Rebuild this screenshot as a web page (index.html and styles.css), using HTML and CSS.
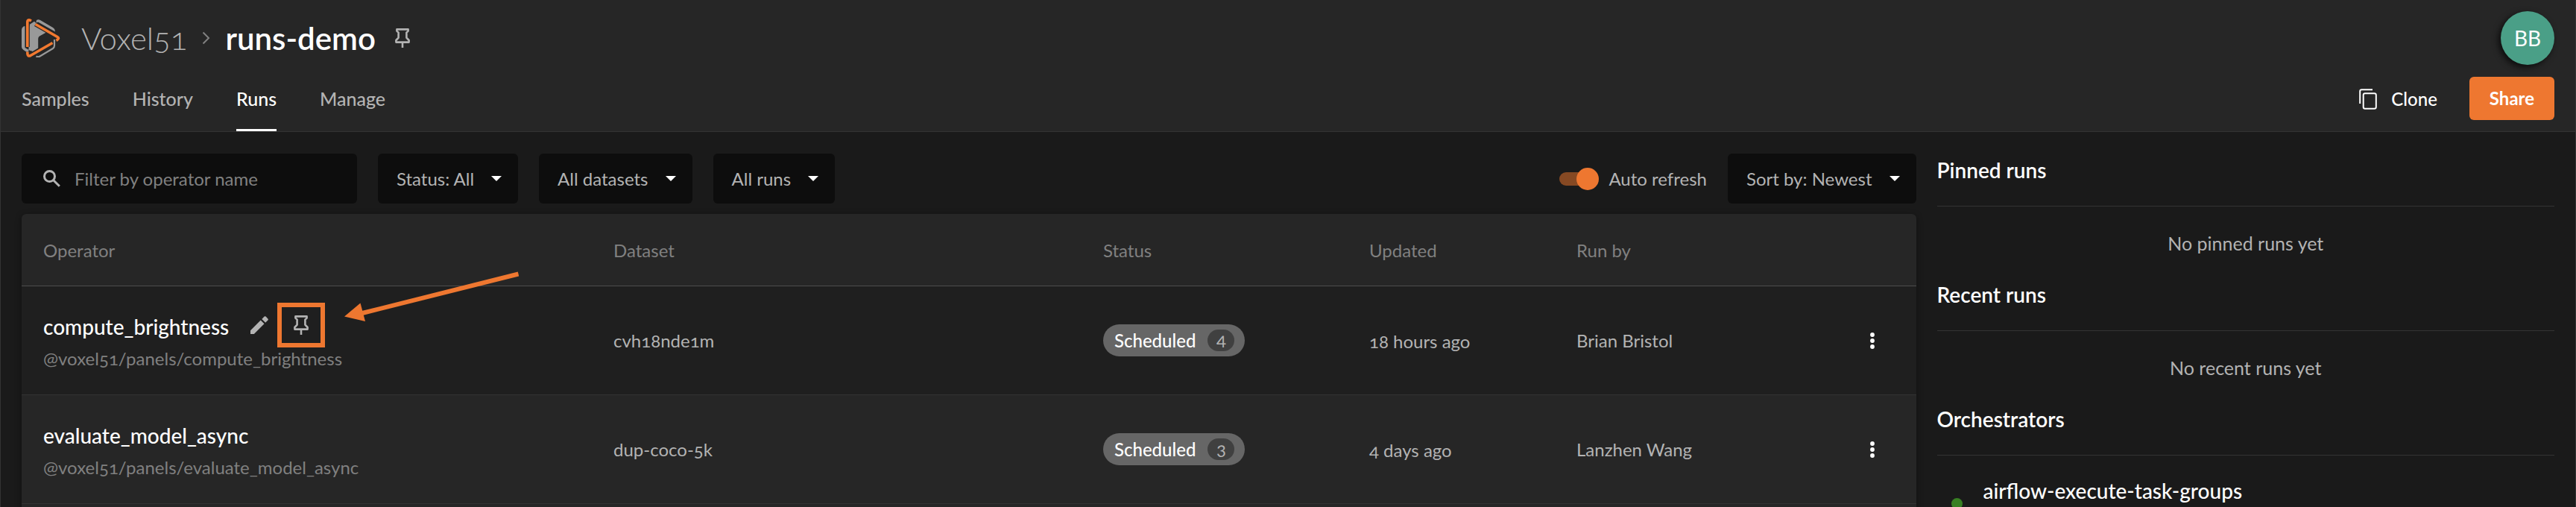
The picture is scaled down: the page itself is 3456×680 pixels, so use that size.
FILE: index.html
```html
<!DOCTYPE html>
<html lang="en">
<head>
<meta charset="utf-8">
<title>runs-demo - Runs</title>
<link rel="stylesheet" href="styles.css">
</head>
<body>
<svg class="sprite" aria-hidden="true">
  <symbol id="pin" viewBox="0 0 20 26">
    <path d="M2.400 1.400h15.200v2.200l-2.200 2v7l3.200 3.400v2.600H1.400V16l3.200-3.400v-7l-2.200-2Z" fill="none" stroke="currentColor" stroke-width="2.600" stroke-linejoin="round"/>
    <path d="M10 18.500V26" fill="none" stroke="currentColor" stroke-width="2.600"/>
  </symbol>
  <symbol id="dots" viewBox="0 0 6 22">
    <circle cx="3" cy="3" r="2.900"/><circle cx="3" cy="11" r="2.900"/><circle cx="3" cy="19" r="2.900"/>
  </symbol>
</svg>
<div class="app">
  <header class="header">
    <div class="top">
      <nav class="crumbs" aria-label="Breadcrumb">
        <svg class="logo" viewBox="0 0 52 52" aria-hidden="true">
          <path d="M0 15q0-3 2.500-4.500L4.500 10v29l8 4.500L20 2q2.500-1.500 5 0l17 10q3 1.800 3 5v.5L22 4.500 9.500 10.500V43l-1 3L2.500 42Q0 40.500 0 38Z" fill="#999"/>
          <path d="M10.500 8 17 3.800 33 18.500l-9 5q-1.800 1-1.800 3.500v12.500l-7.500 4.500-4.200-2Z" fill="#999"/>
          <path d="M19.500 50.500q2.500 1.500 5 0L42 40q2-1.300 2-4v-8" fill="none" stroke="#999" stroke-width="2.200"/>
          <path d="M12.500 3.200Q7.800.2 7.800 4.500V38M18.500 7.500 48 24.500q3.500 2.200-1 4.800M41.500 32.500 12 49.500q-4.200 1.800-4.200-3.500v-1.500" fill="none" stroke="#262626" stroke-width="6"/>
          <path d="M13 3Q7.800.2 7.800 4.500V38M18.500 7.500 48 24.500q3.500 2.200-1.500 4.800M41.500 32.500 12 49.500q-4.200 1.800-4.200-3.500v-1.500" fill="none" stroke="#f27930" stroke-width="3.600"/>
        </svg>
        <a class="org" href="#">Voxel51</a>
        <svg class="chevron" viewBox="0 0 11 18" aria-hidden="true"><path d="M1.500 1.500 9 9l-7.500 7.500"/></svg>
        <h1 class="name">runs-demo</h1>
        <button class="icon-btn" aria-label="Pin dataset"><svg class="pin"><use href="#pin"/></svg></button>
      </nav>
      <button class="avatar">BB</button>
    </div>
    <div class="bar">
      <nav class="tabs" aria-label="Dataset">
        <a class="tab" href="#">Samples</a>
        <a class="tab" href="#">History</a>
        <a class="tab active" href="#" aria-current="page">Runs</a>
        <a class="tab" href="#">Manage</a>
      </nav>
      <div class="actions">
        <button class="clone">
          <svg class="copy" viewBox="0 0 24 28" aria-hidden="true"><path d="M1.200 20V3.500q0-2.300 2.300-2.300H18M8 6.200h12.500q2.300 0 2.300 2.300v16q0 2.300-2.300 2.300H8q-2.300 0-2.300-2.300v-16Q5.700 6.200 8 6.200Z"/></svg>
          Clone
        </button>
        <button class="share">Share</button>
      </div>
    </div>
  </header>

  <div class="content">
    <main class="main">
      <div class="toolbar">
        <label class="search">
          <svg class="glass" viewBox="0 0 23 23" aria-hidden="true"><circle cx="8.500" cy="8.500" r="7"/><path d="m13.500 13.500 8.300 8.300"/></svg>
          <input class="search-input" type="text" placeholder="Filter by operator name" aria-label="Filter by operator name">
        </label>
        <button class="menu-btn">Status: All<span class="caret"></span></button>
        <button class="menu-btn">All datasets<span class="caret"></span></button>
        <button class="menu-btn">All runs<span class="caret"></span></button>
        <div class="spacer"></div>
        <label class="switch"><input class="switch-input" type="checkbox" role="switch" checked>Auto refresh</label>
        <button class="menu-btn">Sort by: Newest<span class="caret"></span></button>
      </div>

      <table class="runs">
        <colgroup><col class="c-operator"><col class="c-dataset"><col class="c-status"><col class="c-updated"><col class="c-user"><col class="c-menu"></colgroup>
        <thead>
          <tr><th>Operator</th><th>Dataset</th><th>Status</th><th>Updated</th><th>Run by</th><th aria-label="Actions"></th></tr>
        </thead>
        <tbody>
          <tr class="hovered">
            <td>
              <div class="op">
                <span class="op-name">compute_brightness</span>
                <button class="icon-btn edit" aria-label="Rename run"><svg class="pencil" viewBox="0 0 24 24" aria-hidden="true"><path d="M0 19.200V24h4.800L18.500 10.300l-4.800-4.800ZM23.400 5.400q.9-1 0-2L20.600.6q-1-.9-2 0L15.300 3.900l4.800 4.800Z"/></svg></button>
                <span class="marked">
                  <button class="icon-btn" aria-label="Pin run"><svg class="pin"><use href="#pin"/></svg></button>
                  <svg class="arrow" viewBox="0 0 234 66" aria-hidden="true"><path d="M233.500 3 22 56" stroke="#ee7730" stroke-width="6"/><path d="M0 60 21.500 42 28 66.500Z" fill="#ee7730"/></svg>
                </span>
              </div>
              <div class="op-uri">@voxel51/panels/compute_brightness</div>
            </td>
            <td>cvh18nde1m</td>
            <td><span class="chip">Scheduled<span class="count">4</span></span></td>
            <td class="when">18 hours ago</td>
            <td>Brian Bristol</td>
            <td><button class="icon-btn more" aria-label="Run actions"><svg class="dots"><use href="#dots"/></svg></button></td>
          </tr>
          <tr>
            <td>
              <div class="op"><span class="op-name">evaluate_model_async</span></div>
              <div class="op-uri">@voxel51/panels/evaluate_model_async</div>
            </td>
            <td>dup-coco-5k</td>
            <td><span class="chip">Scheduled<span class="count">3</span></span></td>
            <td class="when">4 days ago</td>
            <td>Lanzhen Wang</td>
            <td><button class="icon-btn more" aria-label="Run actions"><svg class="dots"><use href="#dots"/></svg></button></td>
          </tr>
          <tr><td colspan="6"></td></tr>
        </tbody>
      </table>
    </main>

    <aside class="side">
      <section class="panel">
        <h2 class="panel-title">Pinned runs</h2>
        <p class="empty">No pinned runs yet</p>
      </section>
      <section class="panel">
        <h2 class="panel-title">Recent runs</h2>
        <p class="empty">No recent runs yet</p>
      </section>
      <section class="panel">
        <h2 class="panel-title">Orchestrators</h2>
        <div class="orch"><span class="online"></span><span class="orch-name">airflow-execute-task-groups</span></div>
      </section>
    </aside>
  </div>
</div>
</body>
</html>
```

FILE: styles.css
```css
* { box-sizing: border-box; }

body {
  margin: 0;
  background: #1a1a1a;
  color: #b3b3b3;
  font: 24px/36px Lato, "Noto Sans", sans-serif;
  font-variant-numeric: oldstyle-nums;
}

button {
  border: 0;
  padding: 0;
  background: none;
  color: inherit;
  font: inherit;
}

a { color: inherit; text-decoration: none; }
svg { display: block; }
.sprite { position: absolute; width: 0; height: 0; }

.app {
  height: 100vh;
  overflow: hidden;
  border: solid #333;
  border-width: 0 1px;
}

/* Header */
.header {
  background: #262626;
  border-bottom: 1px solid #333;
  padding: 0 28px;
}

.top {
  display: flex;
  align-items: center;
  justify-content: space-between;
  height: 101px;
}

.crumbs { display: flex; align-items: center; }
.logo { width: 52px; height: 52px; margin-right: 28px; }
.org, .name { font-size: 42px; line-height: 48px; }
.org { font-weight: 300; }
.chevron { width: 11px; height: 18px; margin: 0 20px; fill: none; stroke: #808080; stroke-width: 2; }
.name { margin: 0 26px 0 0; color: #fff; font-weight: 600; }
.icon-btn { display: flex; flex: none; }
.pin { width: 20px; height: 26px; }

.avatar {
  width: 72px;
  height: 72px;
  border-radius: 50%;
  background: #4a9f87;
  color: #fff;
  font-size: 28px;
  box-shadow: -3px 3px 8px rgba(0, 0, 0, .7);
}

.bar {
  display: flex;
  justify-content: space-between;
  height: 75px;
}

.tabs { display: flex; gap: 58px; }
.tab { padding-top: 13px; font-size: 25px; font-weight: 500; }
.active { color: #fff; border-bottom: 3px solid #fff; }

.actions { display: flex; gap: 43px; align-items: flex-start; }
.clone { display: flex; align-items: center; gap: 19px; height: 64px; color: #fff; font-weight: 500; }
.copy { width: 24px; height: 28px; fill: none; stroke: currentColor; stroke-width: 2; }
.share {
  height: 58px;
  margin-top: 2px;
  padding: 0 27px;
  border-radius: 6px;
  background: #ee7730;
  color: #fff;
  font-weight: 700;
}

/* Body */
.content {
  display: grid;
  grid-template-columns: calc(75% - 7px) 1fr;
  gap: 28px;
  padding: 29px 28px 0;
}

.main { min-width: 0; }

.toolbar { display: flex; align-items: center; gap: 28px; margin-bottom: 14px; }

.search {
  display: flex;
  align-items: center;
  gap: 19px;
  width: 450px;
  height: 67px;
  padding: 0 29px;
  border-radius: 6px;
  background: #0d0d0d;
}

.glass { flex: none; width: 23px; height: 23px; fill: none; stroke: #b3b3b3; stroke-width: 3; }
.search-input {
  flex: 1;
  min-width: 0;
  padding: 0;
  border: 0;
  background: none;
  color: #b3b3b3;
  font: inherit;
}
.search-input::placeholder { color: #808080; opacity: 1; }

.menu-btn {
  display: flex;
  align-items: center;
  gap: 23px;
  height: 67px;
  padding: 0 22px 0 25px;
  border-radius: 6px;
  background: #0d0d0d;
}

.caret {
  border: 7px solid transparent;
  border-top-color: #fff;
  border-bottom: 0;
}

.spacer { flex: 1; }

.switch { display: flex; align-items: center; gap: 13px; }
.switch-input {
  appearance: none;
  position: relative;
  width: 53px;
  height: 30px;
  margin: 0;
}
.switch-input::before {
  content: "";
  position: absolute;
  inset: 6px 5px 6px 0;
  border-radius: 9px;
  background: #864923;
}
.switch-input::after {
  content: "";
  position: absolute;
  top: 0;
  right: 0;
  width: 30px;
  height: 30px;
  border-radius: 50%;
  background: #ee7730;
}

/* Runs table */
.runs {
  width: 100%;
  table-layout: fixed;
  border-spacing: 0;
  border-radius: 6px 6px 0 0;
  background: #262626;
  box-shadow: 0 2px 8px rgba(0, 0, 0, .4);
}

.c-operator { width: 765px; }
.c-dataset { width: 657px; }
.c-status { width: 357px; }
.c-updated { width: 278px; }
.c-menu { width: 103px; }

.runs th {
  height: 97px;
  padding: 2px 29px 0;
  border-bottom: 1px solid #4d4d4d;
  color: #808080;
  font-weight: 400;
  text-align: left;
}

.runs td {
  height: 146px;
  padding: 0 29px;
  border-bottom: 1px solid #333;
}

.runs .when { padding-top: 2px; }

.hovered { background: #1f1f1f; }

.op { display: flex; align-items: center; height: 44px; }
.op-name { padding-top: 4px; color: #fff; font-size: 28px; font-weight: 500; }
.edit { margin: 0 12px 0 29px; }
.pencil { width: 24px; height: 24px; fill: #b3b3b3; }
.op-uri { height: 42px; padding-top: 2px; line-height: 42px; color: #808080; }

.marked {
  position: relative;
  display: flex;
  align-items: center;
  justify-content: center;
  width: 64px;
  height: 60px;
  border: 6px solid #ee7730;
}

.arrow {
  position: absolute;
  left: 84px;
  top: -48px;
  width: 234px;
  height: 67px;
}

.chip {
  display: inline-flex;
  align-items: center;
  gap: 16px;
  height: 43px;
  padding: 0 14px 0 15px;
  border-radius: 22px;
  background: #666;
  color: #fff;
  font-weight: 500;
  vertical-align: middle;
}

.count {
  width: 36px;
  height: 29px;
  border-radius: 15px;
  background: #404040;
  color: #b3b3b3;
  font-weight: 400;
  line-height: 26px;
  text-align: center;
}

.more { padding: 0 12px; color: #fff; }
.dots { width: 6px; height: 22px; fill: currentColor; }

/* Side panels */
.panel-title {
  height: 71px;
  margin: 0;
  border-bottom: 1px solid #333;
  color: #fff;
  font-size: 28px;
  font-weight: 600;
  line-height: 44px;
}

.empty {
  height: 96px;
  margin: 0;
  padding-top: 31px;
  font-size: 25px;
  text-align: center;
}

.orch {
  display: flex;
  align-items: flex-start;
  gap: 28px;
  padding: 26px 0 0 19px;
}

.online {
  width: 15px;
  height: 15px;
  margin-top: 31px;
  border-radius: 50%;
  background: #388023;
}

.orch-name { color: #fff; font-size: 28px; line-height: 42px; font-weight: 500; }
```
